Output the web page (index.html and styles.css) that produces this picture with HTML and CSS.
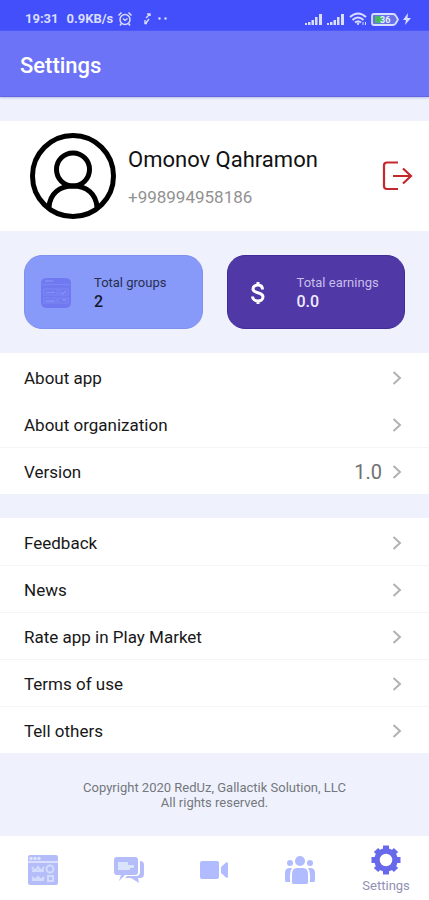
FILE: index.html
```html
<!DOCTYPE html>
<html lang="en">
<head>
<meta charset="utf-8">
<meta name="viewport" content="width=device-width, initial-scale=1">
<title>Settings</title>
<link rel="stylesheet" href="styles.css">
</head>
<body>
<div class="app">
  <div class="status">
    <div class="status-side">
      <span class="clock">19:31</span>
      <span>0.9KB/s</span>
      <svg class="alarm" width="16" height="16" viewBox="0 0 16 16" fill="none" stroke="currentColor"><circle cx="8" cy="8.500" r="5" stroke-width="1.500"/><path d="M1.500 4.500 4.500 1.500M14.500 4.500 11.500 1.500M4.500 12.500 3 14.500M11.500 12.500 13 14.500" stroke-width="1.500"/><path d="M6 7.500 8 9.500 10.500 7.500" stroke-width="1.200"/></svg>
      <svg class="sync" width="28" height="14" viewBox="0 0 28 14" fill="none" stroke="currentColor" stroke-width="1.400"><path d="M5 6 9 2M6 2H9V4M8 7 5 11M4 8V11.500H6"/><g fill="currentColor" stroke="none"><circle cx="18.500" cy="6.500" r="1.200"/><circle cx="24.500" cy="6.500" r="1.200"/></g></svg>
    </div>
    <div class="status-side">
      <svg width="18" height="13" viewBox="0 0 18 13" fill="currentColor"><path d="M0 10h2v2H0zM3 9h2.500v3H3zM6.500 7H9v5H6.500zM10 4h2.500v8H10zM14 1h3v11h-3z"/></svg>
      <svg class="signal" width="18" height="13" viewBox="0 0 18 13" fill="currentColor"><path d="M0 10h2v2H0zM3 9h2.500v3H3zM6.500 7H9v5H6.500zM10 4h2.500v8H10zM14 1h3v11h-3z"/></svg>
      <svg class="wifi" width="18" height="14" viewBox="0 0 18 14" fill="none" stroke="currentColor" stroke-width="2"><path d="M1 5Q9-2 17 5M3.500 8Q9 3 14.500 8M6 10.500Q9 8 12 10.500"/><path d="M8 11h2l-1 2zM14 10v3M16.500 10v3" stroke-width="1"/></svg>
      <svg class="battery" width="28" height="13" viewBox="0 0 28 13"><path d="M3 1H22Q24 1 25 3L27 6.500 25 10Q24 12 22 12H3Q1 12 1 10V3Q1 1 3 1Z" fill="#6672e9" stroke="#d9ddff" stroke-width="1.800"/><path d="M4 3h8v7H4z" fill="#49b95b"/><text x="9" y="10" class="charge">36</text></svg>
      <svg width="8" height="12" viewBox="0 0 8 12" fill="currentColor"><path d="M5 0 0 7h3L2 12 8 5H4.500z"/></svg>
    </div>
  </div>
  <header class="header"><h1>Settings</h1></header>
  <main>
    <section class="profile">
      <svg width="88" height="88" viewBox="0 0 88 88" fill="none" stroke="#000" stroke-width="5"><circle cx="44" cy="44" r="40.500"/><circle cx="44" cy="37.500" r="16.500"/><path d="M20 75C21 62 30 54 44 54S67 62 68 75"/></svg>
      <div class="person"><h2>Omonov Qahramon</h2><p>+998994958186</p></div>
      <button class="logout" aria-label="Log out"><svg width="32" height="32" viewBox="0 0 32 32" fill="none" stroke="#c3282d" stroke-width="2.200"><path d="M17 2.500H6Q3 2.500 3 5.500V26Q3 29 6 29H17M12 16H30M22 8.500 30 16 22 23.500"/></svg></button>
    </section>
    <section class="stats">
      <div class="card card-groups">
        <svg width="30" height="30" viewBox="0 0 30 30"><rect width="30" height="30" rx="5" fill="#7079ef"/><path d="M1 6.500H29M3 11H16V17H3zM18 11H27V17H18zM3 20H16V25H3zM18 20H27V25H18z" fill="none" stroke="#7c87f4" stroke-width="1.200"/><path d="M4 3H12M5 14.500H14M5 23H14M20 14l2 2 3-3M21 22h4" stroke="#8490f6" stroke-width="1.500" fill="none"/></svg>
        <div><p class="label">Total groups</p><p class="value">2</p></div>
      </div>
      <div class="card card-earnings">
        <svg width="30" height="30" viewBox="0 0 30 30" fill="none" stroke="#fff" stroke-width="3"><path d="M18.500 11.500C18.500 8.500 16.500 7 14 7S9 8.500 9 11C9 16 19 13.500 19 19C19 21.500 16.500 23 14 23S8.500 21.500 8.500 18.500M14 4V7M14 23V26"/></svg>
        <div><p class="label">Total earnings</p><p class="value">0.0</p></div>
      </div>
    </section>
    <ul class="list list-about">
      <li><a href="#about">About app<svg class="chevron" viewBox="0 0 10 14"><path d="M1.500 1 8 7 1.500 13"/></svg></a></li>
      <li><a href="#organization">About organization<svg class="chevron" viewBox="0 0 10 14"><path d="M1.500 1 8 7 1.500 13"/></svg></a></li>
      <li><a href="#version">Version<span class="version">1.0</span><svg class="chevron" viewBox="0 0 10 14"><path d="M1.500 1 8 7 1.500 13"/></svg></a></li>
    </ul>
    <ul class="list">
      <li><a href="#feedback">Feedback<svg class="chevron" viewBox="0 0 10 14"><path d="M1.500 1 8 7 1.500 13"/></svg></a></li>
      <li><a href="#news">News<svg class="chevron" viewBox="0 0 10 14"><path d="M1.500 1 8 7 1.500 13"/></svg></a></li>
      <li><a href="#rate">Rate app in Play Market<svg class="chevron" viewBox="0 0 10 14"><path d="M1.500 1 8 7 1.500 13"/></svg></a></li>
      <li><a href="#terms">Terms of use<svg class="chevron" viewBox="0 0 10 14"><path d="M1.500 1 8 7 1.500 13"/></svg></a></li>
      <li><a href="#share">Tell others<svg class="chevron" viewBox="0 0 10 14"><path d="M1.500 1 8 7 1.500 13"/></svg></a></li>
    </ul>
  </main>
  <footer class="copyright">Copyright 2020 RedUz, Gallactik Solution, LLC<br>All rights reserved.</footer>
  <nav class="nav">
    <a href="#groups" aria-label="Groups"><svg width="30" height="30" viewBox="0 0 30 30"><rect width="30" height="30" rx="2" fill="#b5bcfa"/><path d="M0 7H30" stroke="#e6ebfd" stroke-width="1.500"/><g fill="#dce4fb"><circle cx="3" cy="3.500" r="1.700"/><circle cx="7" cy="3.500" r="1.700"/><circle cx="11" cy="3.500" r="1.700"/></g><g fill="none" stroke="#d3dcfb" stroke-width="2"><path d="M4 12l3 4 3-4 3 4 3-4M4 16h12M4 22l3 3 3-3 3 3 3-3M4 25h12"/><circle cx="22" cy="14" r="3.500"/><path d="M19 21h7M20 22v4h5v-4"/></g></svg></a>
    <a href="#messages" aria-label="Messages"><svg width="30" height="30" viewBox="0 0 30 30" fill="#b5bcfa"><path d="M3 2H21Q24 2 24 5V17Q24 20 21 20H11L5 26 7 20H3Q0 20 0 17V5Q0 2 3 2Z"/><path d="M26 6Q30 6 30 10V19Q30 23 26 23H24L25 28 17 23H11L13 21H22Q26 21 26 17Z"/><path d="M4 7H14V10H20V13H16V15H4Z" fill="#d9e4fb"/></svg></a>
    <a href="#video" aria-label="Video"><svg width="30" height="30" viewBox="0 0 30 30" fill="#b1bbff"><rect x="1" y="6" width="19" height="18" rx="2"/><path d="M22 12 27 7.500Q29 6.500 29 8.500V21.500Q29 23.500 27 22.500L22 18Z"/></svg></a>
    <a href="#people" aria-label="People"><svg width="30" height="30" viewBox="0 0 30 30" fill="#b1bbff"><circle cx="15" cy="6" r="5"/><circle cx="5" cy="8" r="3"/><circle cx="25" cy="8" r="3"/><path d="M8 29Q7 29 7 27V19Q7 13 12 13H18Q23 13 23 19V27Q23 29 22 29ZM1 27Q0 27 0 25V18Q0 13 5 13H7Q5 16 5 20V27ZM25 27V20Q25 16 23 13H25Q30 13 30 18V25Q30 27 29 27Z"/></svg></a>
    <a class="active" href="#settings" aria-current="page"><svg width="30" height="30" viewBox="0 0 30 30"><path d="M15 .5V29.500M.5 15H29.500M5 5 25 25M25 5 5 25" stroke="#6868eb" stroke-width="6" stroke-linecap="butt"/><circle cx="15" cy="15" r="9" fill="#fff" stroke="#6868eb" stroke-width="5.500"/></svg><span>Settings</span></a>
  </nav>
</div>
</body>
</html>
```
FILE: styles.css
```css
* { box-sizing: border-box; }
body { margin: 0; background: #eff2fc; color: #171717; font-family: Roboto, "Liberation Sans", sans-serif; }
h1, h2, p, ul { margin: 0; padding: 0; }
a { color: inherit; text-decoration: none; }
svg { display: block; flex-shrink: 0; }
.app { min-height: 100vh; display: flex; flex-direction: column; }
.status { display: flex; justify-content: space-between; padding: 7px 18px 0 25px; height: 31px; background: #444ffc; color: #d9ddff; font-size: 13px; font-weight: 700; line-height: 24px; }
.status-side { display: flex; align-items: center; height: 24px; }
.clock { margin-right: 8px; }
.alarm { margin-left: 4px; }
.sync { margin-left: 8px; }
.signal { margin-left: 4px; }
.wifi { margin-left: 4px; }
.battery { margin: 0 4px; }
.charge { font-size: 9px; font-weight: 700; fill: #e8edff; }
.header { display: flex; align-items: center; height: 66px; padding: 4px 20px 0; background: #6d73f6; color: #fff; border-bottom: 1px solid #6267df; box-shadow: 0 1px 2px #b9bfe8; }
.header h1 { font-size: 22px; font-weight: 500; line-height: 26px; }
main { display: flex; flex-direction: column; gap: 24px; padding-top: 24px; }
.profile { display: flex; align-items: center; height: 110px; padding: 0 16px 0 29px; background: #fff; }
.person { flex: 1; margin-left: 11px; padding-top: 2px; }
.person h2 { font-size: 22px; font-weight: 400; line-height: 26px; color: #111; }
.person p { margin-top: 14px; font-size: 17px; line-height: 20px; color: #929292; }
.logout { padding: 0; border: 0; background: none; }
.stats { display: grid; grid-template-columns: 1fr 1fr; gap: 24px; padding: 0 24px; }
.card { display: flex; align-items: center; gap: 23px; height: 74px; padding: 2px 16px 0; border-radius: 18px; }
.card-groups { background: #879af9; border: 1px solid #8190ed; color: #282f4e; }
.card-earnings { background: #5038a7; border: 1px solid #412b94; color: #c8bfe9; }
.label { font-size: 13px; line-height: 18px; white-space: nowrap; }
.value { font-size: 16px; font-weight: 500; line-height: 20px; }
.card-groups .value { color: #15182e; }
.card-earnings .value { color: #eeeaff; }
.list { list-style: none; background: #fff; }
.list li + li { border-top: 1px solid #f5f5f8; }
.list-about li:nth-child(2) { border-top-color: #fff; }
.list a { display: flex; align-items: center; justify-content: space-between; height: 47px; padding: 3px 27px 0 24px; font-size: 17px; line-height: 22px; }
.list li + li a { height: 46px; padding-top: 1px; }
.version { margin: 0 10px 0 auto; color: #707070; font-size: 20px; }
.chevron { width: 10px; height: 14px; fill: none; stroke: #b2b2b2; stroke-width: 2; }
.copyright { flex: 1; padding-top: 27px; text-align: center; font-size: 13px; line-height: 15px; color: #74777e; }
.nav { display: grid; grid-template-columns: repeat(5, 1fr); height: 64px; background: #fff; }
.nav a { display: flex; flex-direction: column; align-items: center; justify-content: center; padding-top: 3px; }
.nav .active { color: #9090b3; font-size: 13px; line-height: 18px; gap: 2px; }
```
